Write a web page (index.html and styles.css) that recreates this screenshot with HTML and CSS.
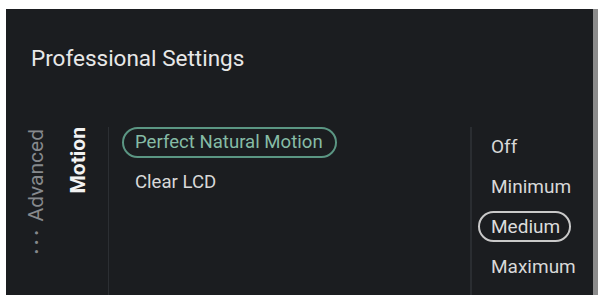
FILE: index.html
```html
<!DOCTYPE html>
<html>
<head>
<meta charset="utf-8">
<link rel="stylesheet" href="styles.css">
</head>
<body>
<div class="panel">
  <div class="title">Professional Settings</div>
  <div class="content">
    <div class="side">
      <div class="vtext crumb"><span class="dots">···</span> Advanced</div>
      <div class="vtext current">Motion</div>
    </div>
    <div class="menu">
      <div class="item pill-green">Perfect Natural Motion</div>
      <div class="item">Clear LCD</div>
    </div>
    <div class="options">
      <div class="item">Off</div>
      <div class="item">Minimum</div>
      <div class="item pill-white">Medium</div>
      <div class="item">Maximum</div>
    </div>
  </div>
</div>
</body>
</html>
```
FILE: styles.css
```css
html, body {
  margin: 0;
  padding: 0;
  background: #ffffff;
  width: 598px;
  height: 295px;
  overflow: hidden;
}
body {
  font-family: Roboto, "Liberation Sans", sans-serif;
}
.panel {
  margin: 9px 0 0 6px;
  width: 587px;
  height: 286px;
  background: #1b1d20;
  border-right: 5px solid #8c8c8c;
  display: flex;
  flex-direction: column;
}
.title {
  padding: 36px 0 0 25px;
  font-size: 22.5px;
  line-height: 26px;
  color: #e8e8e8;
}
.content {
  margin-top: 56px;
  flex: 1;
  display: flex;
}
.side {
  width: 102px;
  padding-left: 18px;
  box-sizing: border-box;
  display: flex;
  align-items: flex-start;
  gap: 17px;
}
.vtext {
  writing-mode: vertical-rl;
  transform: rotate(180deg);
  font-size: 21px;
  line-height: 25px;
  white-space: nowrap;
}
.crumb {
  color: #86898d;
  margin-top: 2px;
}
.dots {
  letter-spacing: 3px;
  font-weight: bold;
}
.current {
  color: #f2f2f2;
  font-weight: bold;
  margin-top: 0;
}
.menu {
  width: 362px;
  box-sizing: border-box;
  border-left: 1px solid #2c2f33;
  padding-left: 13px;
  display: flex;
  flex-direction: column;
  align-items: flex-start;
  gap: 9px;
}
.menu .item {
  font-size: 18.6px;
}
.options {
  flex: 1;
  border-left: 2px solid #2a2d31;
  padding: 4px 0 0 6px;
  display: flex;
  flex-direction: column;
  align-items: flex-start;
  gap: 9px;
}
.item {
  font-size: 19px;
  line-height: 27px;
  padding: 0 11px;
  border: 2px solid transparent;
  border-radius: 16px;
  color: #d8d8d8;
  white-space: nowrap;
}
.pill-green {
  border-color: #5b9683;
  color: #86bca6;
  padding-right: 12px;
}
.pill-white {
  border-color: #c9c9c9;
  color: #dcdcdc;
  padding-right: 9px;
}
```
